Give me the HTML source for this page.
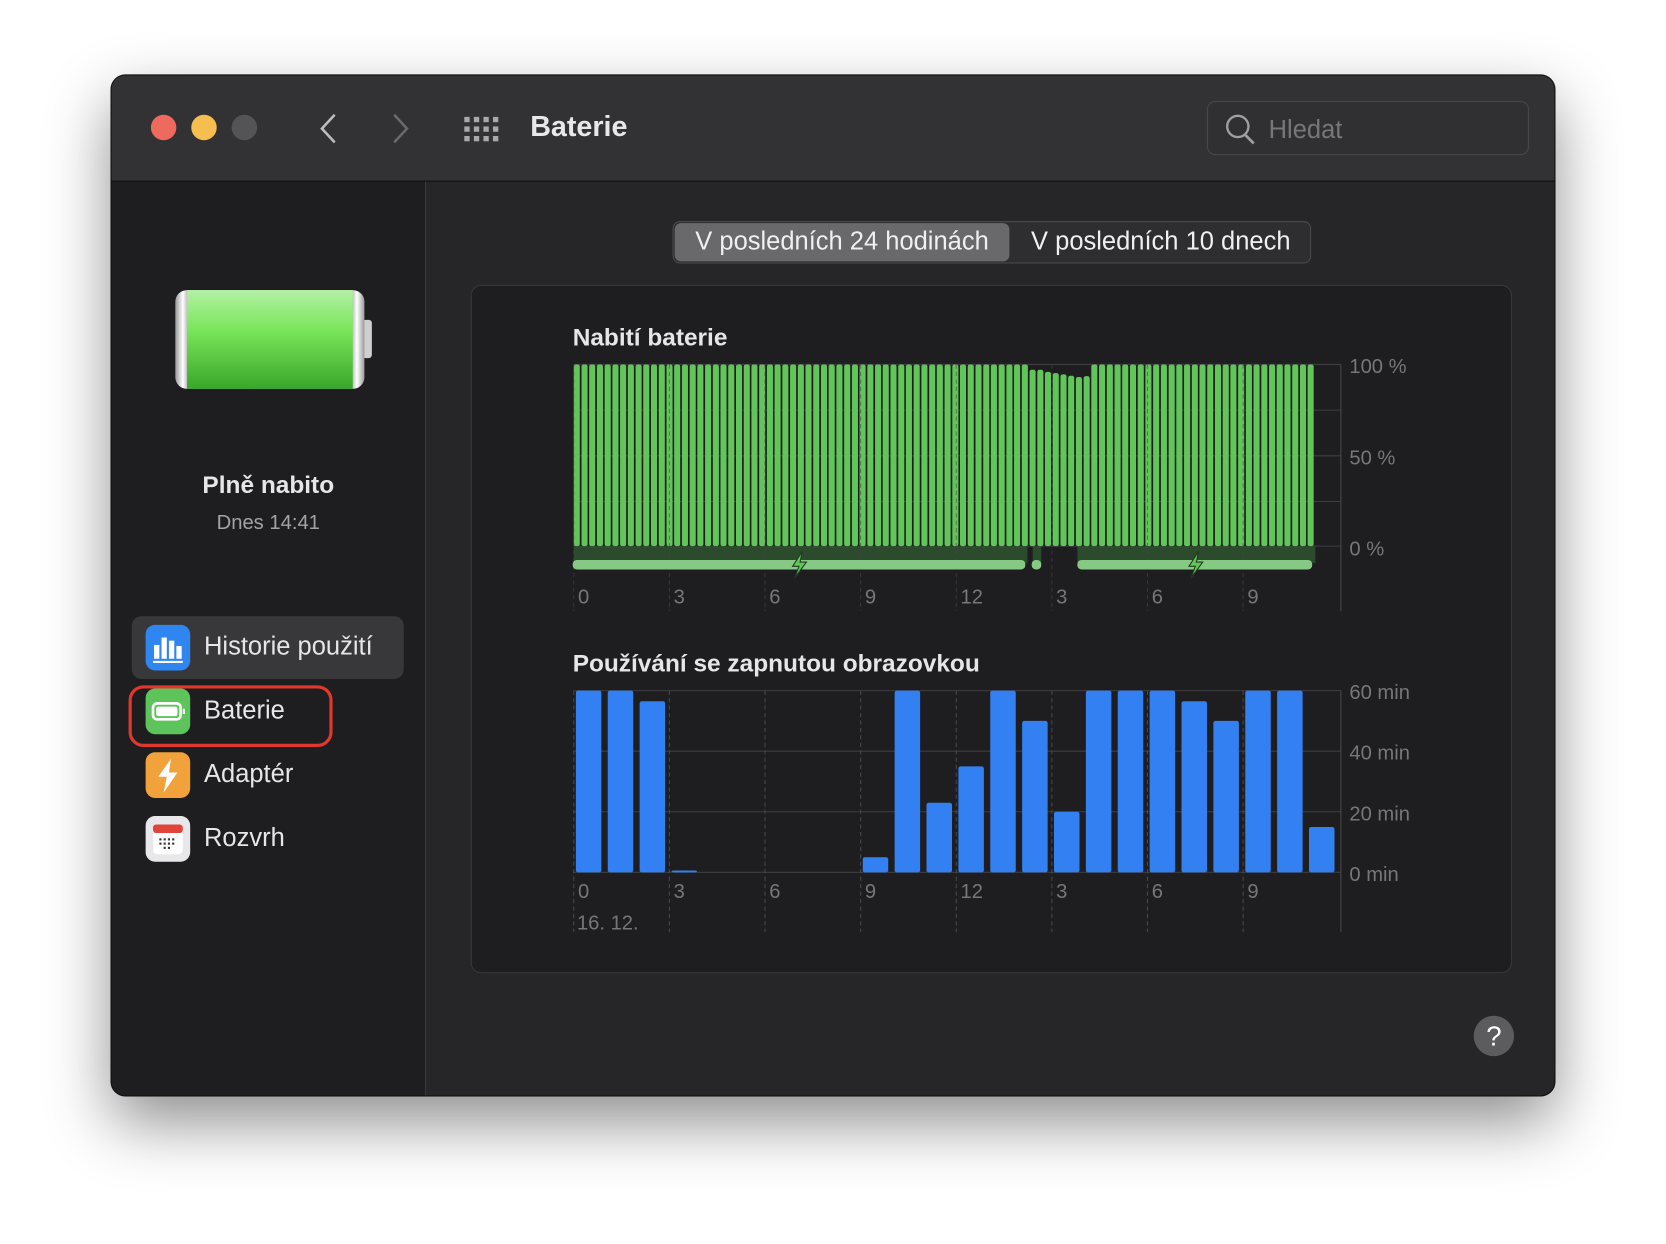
<!DOCTYPE html>
<html><head><meta charset="utf-8"><style>
html,body{margin:0;padding:0;background:#fff;width:1666px;height:1244px;overflow:hidden}
#wrap{position:absolute;left:0;top:0;width:1568px;height:1171px;transform:scale(1.0625);transform-origin:0 0;font-family:"Liberation Sans",sans-serif}
.win{position:absolute;left:105px;top:71px;width:1358px;height:960px;border-radius:13px;background:#262628;box-shadow:0 25px 60px rgba(0,0,0,.45),0 0 0 1px #111;overflow:hidden}
.tb{position:absolute;left:0;top:0;width:100%;height:99px;background:#323234;border-bottom:1px solid #0e0e0e}
.side{position:absolute;left:0;top:100px;width:295px;height:860px;background:#1e1e20;border-right:1px solid #3a3a3c}
.dot{position:absolute;width:24px;height:24px;border-radius:50%;top:37px}
.t{position:absolute;white-space:nowrap}
</style></head><body><div id="wrap">
<div class="win">
 <div class="tb">
  <div class="dot" style="left:37px;background:#ee6a5f"></div>
  <div class="dot" style="left:75px;background:#f5be4f"></div>
  <div class="dot" style="left:113px;background:#545456"></div>
  <svg style="position:absolute;left:190px;top:33px" width="100" height="34"><path d="M20 4 L8 17 L20 30" stroke="#bdbdbf" stroke-width="2.4" fill="none"/><path d="M76 4 L88 17 L76 30" stroke="#6a6a6c" stroke-width="2.4" fill="none"/></svg>
  <svg style="position:absolute;left:331px;top:38px" width="36" height="26" fill="#a9a9ab"><rect x="1" y="1" width="5" height="5"/><rect x="10" y="1" width="5" height="5"/><rect x="19" y="1" width="5" height="5"/><rect x="28" y="1" width="5" height="5"/><rect x="1" y="10" width="5" height="5"/><rect x="10" y="10" width="5" height="5"/><rect x="19" y="10" width="5" height="5"/><rect x="28" y="10" width="5" height="5"/><rect x="1" y="19" width="5" height="5"/><rect x="10" y="19" width="5" height="5"/><rect x="19" y="19" width="5" height="5"/><rect x="28" y="19" width="5" height="5"/></svg>
  <div class="t" style="left:394px;top:33px;font-size:27px;font-weight:bold;color:#e8e8e8">Baterie</div>
  <div style="position:absolute;left:1031px;top:24px;width:301px;height:49px;border:1px solid #48484a;border-radius:8px;background:#303032"></div>
  <svg style="position:absolute;left:1046px;top:35px" width="34" height="34"><circle cx="14" cy="13" r="10" stroke="#a0a0a2" stroke-width="2.2" fill="none"/><path d="M21 21 L29 29" stroke="#a0a0a2" stroke-width="2.6"/></svg>
  <div class="t" style="left:1089px;top:38px;font-size:24px;color:#77777a">Hledat</div>
 </div>
 <div class="side">
  <svg style="position:absolute;left:58px;top:100px" width="190" height="100">
   <defs><linearGradient id="g" x1="0" y1="0" x2="0" y2="1"><stop offset="0" stop-color="#b4f0a6"/><stop offset=".4" stop-color="#7ae65a"/><stop offset="1" stop-color="#3aa62a"/></linearGradient>
   <linearGradient id="s" x1="0" y1="0" x2="1" y2="0"><stop offset="0" stop-color="#999"/><stop offset=".04" stop-color="#fff"/><stop offset=".07" stop-color="#aaa"/><stop offset=".93" stop-color="#aaa"/><stop offset=".96" stop-color="#fff"/><stop offset="1" stop-color="#999"/></linearGradient></defs>
   <rect x="178" y="30" width="9" height="36" rx="3" fill="#cfcfcf"/>
   <rect x="2" y="2" width="178" height="93" rx="11" fill="url(#s)"/>
   <rect x="13" y="2" width="156" height="93" fill="url(#g)"/>
  </svg>
  <div class="t" style="left:0;width:295px;text-align:center;top:272px;font-size:23px;font-weight:bold;color:#e6e6e6">Plně nabito</div>
  <div class="t" style="left:0;width:295px;text-align:center;top:311px;font-size:19px;color:#a3a3a5">Dnes 14:41</div>
  <div style="position:absolute;left:19px;top:409px;width:256px;height:59px;border-radius:9px;background:#38383a"></div>
  <div style="position:absolute;left:16px;top:474px;width:186px;height:52px;border:3px solid #e0392b;border-radius:14px"></div>
  <svg style="position:absolute;left:32px;top:417px" width="44" height="226">
   <rect x="0" y="0" width="42" height="43" rx="9" fill="#2f86f0"/>
   <g fill="#fff"><rect x="8" y="19" width="5" height="13"/><rect x="15" y="12" width="5" height="20"/><rect x="22" y="15" width="5" height="17"/><rect x="29" y="20" width="5" height="12"/><rect x="7" y="34" width="28" height="2"/></g>
   <rect x="0" y="60" width="42" height="43" rx="9" fill="#5cc45a"/>
   <rect x="7" y="74" width="26" height="15" rx="4" stroke="#fff" stroke-width="2.5" fill="none"/><rect x="10" y="77" width="20" height="9" rx="2" fill="#fff"/><rect x="35" y="79" width="2" height="5" fill="#fff"/>
   <rect x="0" y="120" width="42" height="43" rx="9" fill="#f2a23a"/>
   <path d="M24 126 L12 143 L20 143 L17 158 L30 139 L22 139 Z" fill="#fff"/>
   <rect x="0" y="180" width="42" height="43" rx="9" fill="#e8e8ea"/>
   <rect x="7" y="188" width="28" height="28" rx="4" fill="#fff"/><rect x="7" y="188" width="28" height="8" rx="3" fill="#e0443a"/>
   <g fill="#333"><rect x="13" y="201" width="2" height="2"/><rect x="17" y="201" width="2" height="2"/><rect x="21" y="201" width="2" height="2"/><rect x="25" y="201" width="2" height="2"/><rect x="13" y="205" width="2" height="2"/><rect x="17" y="205" width="2" height="2"/><rect x="21" y="205" width="2" height="2"/><rect x="25" y="205" width="2" height="2"/><rect x="17" y="209" width="2" height="2"/><rect x="21" y="209" width="2" height="2"/></g>
  </svg>
  <div class="t" style="left:87px;top:424px;font-size:24px;color:#e6e6e6">Historie použití</div>
  <div class="t" style="left:87px;top:484px;font-size:24px;color:#e6e6e6">Baterie</div>
  <div class="t" style="left:87px;top:544px;font-size:24px;color:#e6e6e6">Adaptér</div>
  <div class="t" style="left:87px;top:604px;font-size:24px;color:#e6e6e6">Rozvrh</div>
 </div>
 <div style="position:absolute;left:528px;top:137px;width:599px;height:38px;border:1px solid #4a4a4c;border-radius:7px;background:#2e2e30"></div>
 <div style="position:absolute;left:530px;top:139px;width:315px;height:36px;border-radius:6px;background:#69696b"></div>
 <div class="t" style="left:530px;width:315px;text-align:center;top:143px;font-size:24px;color:#f0f0f0">V posledních 24 hodinách</div>
 <div class="t" style="left:845px;width:285px;text-align:center;top:143px;font-size:24px;color:#f0f0f0">V posledních 10 dnech</div>
 <div style="position:absolute;left:338px;top:197px;width:978px;height:646px;border:1px solid #38383a;border-radius:10px;background:#1e1e20"></div>
 <div style="position:absolute;left:1282px;top:885px;width:38px;height:38px;border-radius:50%;background:#5c5c5e;color:#fff;font-size:26px;text-align:center;line-height:38px">?</div>
</div>
<svg id="ch" style="position:absolute;left:0;top:0" width="1568" height="1171" font-family="Liberation Sans, sans-serif"></svg>
</div>
<script>
(function(){
var s='';
s+='<text x="539" y="325" font-size="23" font-weight="bold" fill="#e6e6e6">Nabití baterie</text>';
s+='<text x="539" y="632" font-size="23" font-weight="bold" fill="#e6e6e6">Používání se zapnutou obrazovkou</text>';
var xs=[540,630,720,810,900,990,1080,1170],lb=['0','3','6','9','12','3','6','9'];
[343,386,429,472,514].forEach(function(y){s+='<line x1="540" y1="'+y+'" x2="1262" y2="'+y+'" stroke="#3e3e40"/>';});
[650,707,764,821].forEach(function(y){s+='<line x1="540" y1="'+y+'" x2="1262" y2="'+y+'" stroke="#3e3e40"/>';});
s+='<rect x="540" y="514" width="427" height="16" fill="#2c4a2c"/><rect x="972" y="514" width="8" height="16" fill="#2c4a2c"/><rect x="1014" y="514" width="224" height="16" fill="#2c4a2c"/>';
var p=698/96;
for(var i=0;i<96;i++){var x=540+i*p,tp=343;
 if(i>=59&&i<=60)tp=348;if(i>=61&&i<=65)tp=350+(i-61)*1.2;if(i==66)tp=354;
 s+='<rect x="'+x.toFixed(1)+'" y="'+tp+'" width="'+(p-1.6).toFixed(1)+'" height="'+(514-tp)+'" rx="2" fill="#62c55a"/>';}
for(var i=0;i<8;i++){s+='<line x1="'+xs[i]+'" y1="343" x2="'+xs[i]+'" y2="575" stroke="#48484a" stroke-dasharray="4 3" opacity="0.6"/>';
s+='<line x1="'+xs[i]+'" y1="650" x2="'+xs[i]+'" y2="877" stroke="#48484a" stroke-dasharray="4 3"/>';
s+='<text x="'+(xs[i]+4)+'" y="568" font-size="19" fill="#77777a">'+lb[i]+'</text>';
s+='<text x="'+(xs[i]+4)+'" y="845" font-size="19" fill="#77777a">'+lb[i]+'</text>';}
s+='<text x="543" y="875" font-size="19" fill="#77777a">16. 12.</text>';
s+='<line x1="1262" y1="343" x2="1262" y2="575" stroke="#4a4a4c"/><line x1="1262" y1="650" x2="1262" y2="877" stroke="#4a4a4c"/>';
[['100 %',351],['50 %',437],['0 %',523]].forEach(function(a){s+='<text x="1270" y="'+a[1]+'" font-size="19" fill="#77777a">'+a[0]+'</text>';});
[['60 min',658],['40 min',715],['20 min',772],['0 min',829]].forEach(function(a){s+='<text x="1270" y="'+a[1]+'" font-size="19" fill="#77777a">'+a[0]+'</text>';});
s+='<rect x="539" y="527" width="426" height="9" rx="4" fill="#86c985"/><rect x="971" y="527" width="9" height="9" rx="4" fill="#86c985"/><rect x="1014" y="527" width="221" height="9" rx="4" fill="#86c985"/>';
[752,1125].forEach(function(c){s+='<path d="M'+(c+3)+' 519 L'+(c-6)+' 533 L'+(c)+' 533 L'+(c-4)+' 544 L'+(c+7)+' 529 L'+(c+1)+' 529 Z" fill="#62c55a" stroke="#1e3a1e" stroke-width="1"/>';});
var h=[60,60,56.5,0.6,0,0,0,0,0,5,60,23,35,60,50,20,60,60,60,56.5,50,60,60,15];
for(var i=0;i<24;i++){if(h[i]<=0)continue;var hh=h[i]/60*171;if(hh<1.5)hh=1.5;
 s+='<rect x="'+(542+30*i)+'" y="'+(821-hh).toFixed(1)+'" width="24" height="'+hh.toFixed(1)+'" rx="2" fill="#3280f2"/>';}
document.getElementById('ch').innerHTML=s;
})();
</script>
</body></html>
